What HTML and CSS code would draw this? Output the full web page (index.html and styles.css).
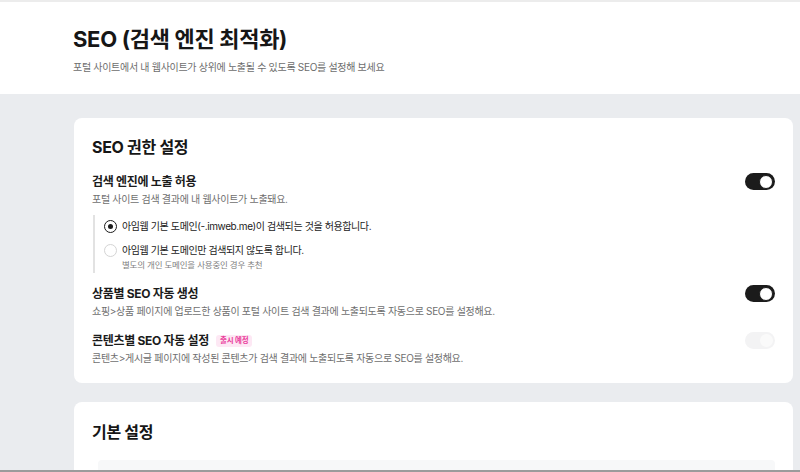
FILE: index.html
```html
<!DOCTYPE html>
<html lang="ko">
<head>
<meta charset="utf-8">
<title>SEO</title>
<link rel="stylesheet" href="styles.css">
</head>
<body>
<div class="page">
  <header class="header">
    <h1 class="page-title">SEO (검색 엔진 최적화)</h1>
    <p class="page-sub">포털 사이트에서 내 웹사이트가 상위에 노출될 수 있도록 SEO를 설정해 보세요</p>
  </header>
  <main class="content">
    <section class="card">
      <h2 class="card-title">SEO 권한 설정</h2>
      <div class="row row-first">
        <div class="row-text">
          <div class="row-title">검색 엔진에 노출 허용</div>
          <div class="row-desc">포털 사이트 검색 결과에 내 웹사이트가 노출돼요.</div>
          <div class="radio-group">
            <label class="radio-item">
              <span class="radio radio-on"></span>
              <span class="radio-label">아임웹 기본 도메인(-.imweb.me)이 검색되는 것을 허용합니다.</span>
            </label>
            <label class="radio-item radio-item-2">
              <span class="radio"></span>
              <span class="radio-label">아임웹 기본 도메인만 검색되지 않도록 합니다.</span>
            </label>
            <div class="radio-hint">별도의 개인 도메인을 사용중인 경우 추천</div>
          </div>
        </div>
        <span class="toggle toggle-on"><span class="knob"></span></span>
      </div>
      <div class="row row-second">
        <div class="row-text">
          <div class="row-title">상품별 SEO 자동 생성</div>
          <div class="row-desc">쇼핑&gt;상품 페이지에 업로드한 상품이 포털 사이트 검색 결과에 노출되도록 자동으로 SEO를 설정해요.</div>
        </div>
        <span class="toggle toggle-on"><span class="knob"></span></span>
      </div>
      <div class="row row-third">
        <div class="row-text">
          <div class="row-title">콘텐츠별 SEO 자동 설정 <span class="badge">출시 예정</span></div>
          <div class="row-desc">콘텐츠&gt;게시글 페이지에 작성된 콘텐츠가 검색 결과에 노출되도록 자동으로 SEO를 설정해요.</div>
        </div>
        <span class="toggle toggle-off"><span class="knob"></span></span>
      </div>
    </section>
    <section class="card card-2">
      <h2 class="card-title">기본 설정</h2>
      <div class="field-stub"></div>
    </section>
  </main>
</div>
</body>
</html>
```
FILE: styles.css
```css
* { box-sizing: border-box; }
html, body { margin: 0; padding: 0; }
body {
  font-family: "Inter", "Noto Sans CJK KR", sans-serif;
  color: #1b1b1b;
  background: #eaecef;
  overflow: hidden;
}
.page {
  width: 800px;
  height: 472px;
  display: flex;
  flex-direction: column;
  border-bottom: 2px solid #9b9b9b;
  overflow: hidden;
}
.header {
  background: #fff;
  border-top: 2px solid #ececec;
  height: 94px;
  padding: 23px 0 0 73px;
  flex: none;
}
.page-title {
  margin: 0;
  font-size: 22px;
  line-height: 28px;
  font-weight: 700;
  letter-spacing: -0.3px;
  color: #161616;
}
.page-sub {
  margin: 7px 0 0;
  font-size: 10px;
  line-height: 14px;
  color: #6d6d6d;
  letter-spacing: -0.3px;
}
.content {
  padding: 24px 7px 0 74px;
  display: flex;
  flex-direction: column;
  gap: 19px;
}
.card {
  background: #fff;
  border-radius: 8px;
  padding: 18px 18px 17px;
}
.card-title {
  margin: 0;
  font-size: 16px;
  line-height: 22px;
  font-weight: 700;
  letter-spacing: -0.3px;
  color: #161616;
}
.row {
  display: flex;
  justify-content: space-between;
  align-items: flex-start;
}
.row-first { margin-top: 15px; }
.row-second { margin-top: 12px; }
.row-third { margin-top: 13px; }
.row-title {
  font-size: 12px;
  line-height: 18px;
  font-weight: 700;
  letter-spacing: -0.3px;
  color: #1b1b1b;
  display: flex;
  align-items: center;
}
.row-desc {
  font-size: 10px;
  line-height: 16px;
  margin-top: 0;
  color: #6f6f6f;
  letter-spacing: -0.3px;
}
.radio-group {
  margin-top: 8px;
  margin-left: 1px;
  border-left: 2px solid #e2e2e2;
  padding: 2px 0 1px 9px;
  display: flex;
  flex-direction: column;
}
.radio-item {
  display: flex;
  align-items: center;
  gap: 5px;
  height: 18px;
}
.radio-item-2 { margin-top: 6px; }
.radio {
  width: 13px;
  height: 13px;
  border-radius: 50%;
  border: 1px solid #d4d4d4;
  background: #fff;
  flex: none;
  display: flex;
  align-items: center;
  justify-content: center;
}
.radio-on {
  border: 1.5px solid #1b1b1b;
}
.radio-on::after {
  content: "";
  width: 5px;
  height: 5px;
  border-radius: 50%;
  background: #1b1b1b;
}
.radio-label {
  font-size: 10px;
  line-height: 16px;
  color: #222;
  letter-spacing: -0.4px;
}
.radio-hint {
  margin-left: 18px;
  font-size: 8.5px;
  line-height: 13px;
  color: #808080;
  letter-spacing: -0.2px;
}
.badge {
  margin-left: 7px;
  font-size: 7.5px;
  line-height: 12px;
  font-weight: 700;
  padding: 0 4px;
  border-radius: 3px;
  background: #fde8f4;
  color: #ea3d9c;
  letter-spacing: -0.2px;
}
.toggle {
  width: 30px;
  height: 17px;
  border-radius: 9px;
  flex: none;
  display: flex;
  align-items: center;
  padding: 2px;
  margin-top: 0;
}
.toggle-on {
  background: #1b1b1b;
  justify-content: flex-end;
}
.toggle-on .knob {
  width: 14px;
  height: 14px;
  border-radius: 50%;
  background: #fff;
  border: 1px solid #1b1b1b;
}
.toggle-off {
  background: #f3f3f4;
  justify-content: flex-end;
}
.toggle-off .knob {
  width: 13px;
  height: 13px;
  border-radius: 50%;
  background: #fafafa;
}
.card-2 {
  padding-top: 19px;
  height: 90px;
}
.field-stub {
  margin: 17px 0 0 6px;
  height: 20px;
  border-radius: 4px;
  background: #f7f8f9;
}
```
